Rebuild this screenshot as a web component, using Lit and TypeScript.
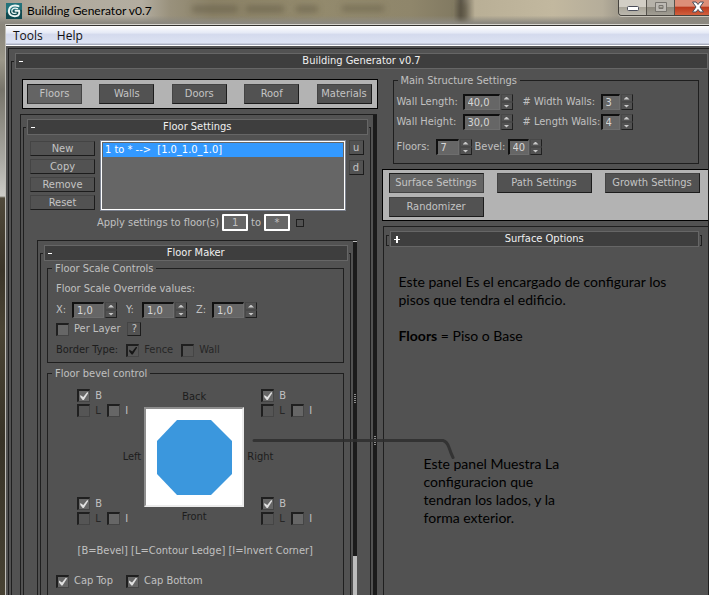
import { LitElement, html, css, svg, nothing } from "lit";
import { customElement, property } from "lit/decorators.js";

const controls = css`
  * {
    box-sizing: border-box;
  }
  button,
  input {
    font: inherit;
    color: inherit;
    margin: 0;
    padding: 0;
    border-radius: 0;
  }
  .check {
    display: inline-flex;
    align-items: center;
    gap: 5px;
  }
  .check input {
    appearance: none;
    flex: none;
    width: 13px;
    height: 13px;
    background: #666;
    border: solid;
    border-width: 2px 1px 1px 2px;
    border-color: #1f1f1f #454545 #454545 #1f1f1f;
    display: grid;
    place-items: center;
  }
  .check input:checked::before {
    content: "";
    width: 8px;
    height: 8px;
    background: #e0e0e0;
    clip-path: polygon(0 38%, 38% 64%, 88% 0, 100% 12%, 44% 100%, 30% 100%, 0 64%);
  }
  .check.off {
    color: #262626;
  }
  .check.off input {
    background: #555;
  }
  .check.off input:checked::before {
    background: #161616;
  }
`;

@customElement("spin-box")
class SpinBox extends LitElement {
  @property() value = "";
  @property() label = "";

  static styles = [
    controls,
    css`
      :host {
        display: flex;
        height: 16px;
      }
      input {
        flex: 1;
        width: 0;
        min-width: 0;
        background: #666;
        color: #d6d6d6;
        border: solid;
        border-width: 2px 1px 1px 2px;
        border-color: #101010 #6e6e6e #6e6e6e #101010;
        padding-left: 3px;
      }
      .arrows {
        display: flex;
        flex-direction: column;
        width: 12px;
        margin-left: 1px;
      }
      button {
        flex: 1;
        background: #525252;
        border: solid 1px;
        border-color: #484848 #202020 #484848 #484848;
        display: grid;
        place-items: center;
      }
      button:last-child {
        border-bottom-color: #202020;
      }
      button::before {
        content: "";
        width: 6px;
        height: 3px;
        background: #c8c8c8;
        clip-path: polygon(50% 0, 100% 100%, 0 100%);
      }
      button:last-child::before {
        clip-path: polygon(0 0, 100% 0, 50% 100%);
      }
    `,
  ];

  render() {
    return html`
      <input type="text" aria-label=${this.label} .value=${this.value} />
      <div class="arrows">
        <button aria-label="Increase"></button>
        <button aria-label="Decrease"></button>
      </div>
    `;
  }
}

@customElement("app-root")
class AppRoot extends LitElement {
  static styles = [
    controls,
    css`
      :host {
        display: flex;
        flex-direction: column;
        min-height: 100vh;
        padding-left: 5px;
        overflow: hidden;
        font: 11px/14px "DejaVu Sans Condensed", "DejaVu Sans", sans-serif;
        color: #c0c0c0;
        background: linear-gradient(
          #8f8b81 0,
          #8a867b 30px,
          #9b9789 60px,
          #77746a 90px,
          #8d8b82 120px,
          #aaa9a3 160px,
          #cdccc7 196px,
          #50493a 198px,
          #3b3529 270px,
          #4a4434 330px,
          #383327 440px,
          #474233 595px
        );
      }

      /* Title bar */
      .title-bar {
        display: flex;
        align-items: flex-start;
        height: 24px;
        margin-left: -5px;
        padding-left: 6px;
        color: #000;
        font: 12px/20px Lato, "Liberation Sans", sans-serif;
        position: relative;
        background: linear-gradient(transparent 65%, #8c8980 95%),
          linear-gradient(
            90deg,
            #a29d92 0,
            #b0aa9d 5%,
            #b3ada0 20%,
            #99917c 24%,
            #8b8267 30%,
            #938a6d 45%,
            #8f866b 58%,
            #827a62 64%,
            #5d574a 65%,
            #b9af96 67%,
            #c2b89f 78%,
            #b5ad9a 85%,
            #928d82 89%,
            #8a867e 100%
          );
      }
      .ghost {
        position: absolute;
        inset: 0;
        width: 100%;
        height: 100%;
      }
      .logo {
        flex: none;
        margin-top: 3px;
        position: relative;
      }
      h1 {
        flex: 1;
        margin: 1px 0 0 5px;
        font: inherit;
        position: relative;
      }
      .window-buttons {
        display: flex;
        height: 16px;
        border: 1px solid #46433e;
        border-width: 0 0 1px 1px;
        border-radius: 0 0 0 4px;
        overflow: hidden;
        position: relative;
        box-shadow: 0 1px 0 #c9c5bb;
      }
      .window-buttons button {
        width: 28px;
        border: 0;
        border-right: 1px solid #55524c;
        background: linear-gradient(#d2cec5 0 45%, #aaa69a 50%, #bcb8ae);
        display: grid;
        place-items: center;
        padding-bottom: 2px;
      }
      .window-buttons .max {
        background: linear-gradient(#b6b2a9 0 45%, #8f8b80 50%, #a29e94);
      }
      .window-buttons .close {
        width: 34px;
        border-right: 0;
        padding-left: 12px;
        background: linear-gradient(#dd8e78 0 40%, #bb3a1e 50%, #d2603e);
      }

      .window {
        flex: 1;
        display: flex;
        flex-direction: column;
        border-top: 1px solid #d8d6d0;
        border-left: 1px solid #c0beb8;
        background: #525252;
      }
      .menu {
        display: flex;
        gap: 14px;
        height: 21px;
        padding: 1px 7px 0;
        border-top: 1px solid #33322f;
        border-bottom: 1px solid #fff;
        background: linear-gradient(#fff, #e6eaf6 35%, #d4daed 45%, #dde3f3 90%, #a8adbd 95%);
        color: #111;
        font: 12px/18px "Open Sans", "Noto Sans", sans-serif;
      }
      .menu button {
        border: 0;
        background: none;
      }

      /* Panels and rollouts */
      .panel {
        flex: 1;
        display: flex;
        border: 1px solid #1f1f1f;
        border-width: 1px 0 0 1px;
      }
      .rollout {
        flex: 1;
        min-width: 0;
        display: flex;
        flex-direction: column;
        position: relative;
        margin: 4px 2px 0;
      }
      .rollout::before {
        content: "";
        position: absolute;
        inset: 8px 0 0 0;
        border: 1px solid #1f1f1f;
        border-bottom: 0;
        pointer-events: none;
      }
      .rollout.closed::before {
        inset: 4px 0 auto 0;
        height: 9px;
        border-bottom: 1px solid #1f1f1f;
      }
      .rollout > h2 {
        position: relative;
        display: flex;
        height: 16px;
        margin: 0 3px 0 4px;
        border: 1px solid #666;
        background: #3e3e3e;
        box-shadow: 0 0 0 1px #525252;
        color: #f0f0f0;
        font: inherit;
      }
      .rollout > h2 button {
        flex: 1;
        border: 0;
        background: none;
        line-height: 14px;
      }
      .sign {
        position: absolute;
        left: 3px;
        top: 7px;
        width: 4px;
        height: 1px;
        background: #fff;
      }
      .closed .sign {
        left: 3px;
        top: 4px;
        width: 6px;
        height: 7px;
        background: linear-gradient(#fff, #fff) center / 6px 1px no-repeat,
          linear-gradient(#fff, #fff) center / 2px 7px no-repeat;
      }
      .client {
        margin: 2px 0 0 2px;
      }
      .client > .rollout {
        margin-right: 0;
      }
      .client > .rollout > h2 {
        margin-right: 1px;
      }
      .columns {
        flex: 1;
        display: grid;
        grid-template-columns: minmax(0, 357fr) minmax(0, 327fr);
        gap: 4px;
        padding: 5px 0 0 9px;
      }
      .column {
        display: flex;
        flex-direction: column;
        gap: 5px;
      }
      .scroll {
        flex: none;
        width: 4px;
        display: flex;
        flex-direction: column;
        background: #1b1b1b;
        position: relative;
      }
      .scroll::before {
        content: "";
        position: absolute;
        left: 1px;
        bottom: 150px;
        width: 2px;
        height: 9px;
        background: repeating-linear-gradient(#8a8a8a 0 1px, #1b1b1b 1px 2px);
      }
      .scroll .thumb {
        margin-top: auto;
        height: 39px;
        background: #bcbcbc;
      }
      .scroll.inner {
        border-top: 1px solid #bcbcbc;
      }
      .scroll.inner::before {
        bottom: 192px;
      }

      /* Buttons */
      .btn {
        height: 20px;
        border: 1px solid;
        border-color: #444 #1c1c1c #1c1c1c #444;
        background: #525252;
        color: #c4c4c4;
        line-height: 16px;
        white-space: nowrap;
      }
      .btn.on {
        background: #646464;
        border-color: #1c1c1c #444 #444 #1c1c1c;
      }
      .btn.small {
        height: 15px;
        line-height: 12px;
      }
      .tabs {
        display: flex;
        justify-content: space-between;
        margin: 5px 0 0 2px;
        padding: 4px 5px 4px 4px;
        border: 1px solid #000;
        background: #b3b3b3;
      }
      .tabs .btn {
        width: 55px;
      }
      .settings-tabs {
        display: grid;
        grid-template-columns: repeat(3, 95px);
        gap: 4px 13px;
        padding: 3px 6px;
        border: 1px solid #000;
        background: #b3b3b3;
      }

      /* Floor settings */
      .left-panel {
        margin-right: 1px;
      }
      .body {
        flex: 1;
        display: flex;
        flex-direction: column;
        padding: 5px 7px 0;
      }
      .body.tight {
        padding-top: 1px;
      }
      .floor-list {
        display: flex;
      }
      .actions {
        display: grid;
        width: 65px;
        gap: 3px;
        align-content: center;
        margin-right: 5px;
      }
      .list {
        flex: 1;
        height: 71px;
        margin: 0 3px 0 0;
        padding: 1px;
        list-style: none;
        background: #666;
        border: 2px solid #fff;
        outline: 1px solid #7c828f;
        outline-offset: -1px;
      }
      .list li {
        height: 14px;
        padding-left: 2px;
        background: #3399ff;
        color: #fff;
        white-space: pre;
      }
      .order {
        display: grid;
        width: 15px;
        gap: 5px;
        align-content: start;
      }
      .apply {
        display: flex;
        align-items: center;
        gap: 3px;
        height: 17px;
        margin-top: 3px;
        padding-left: 67px;
        white-space: nowrap;
      }
      .apply input[type="text"] {
        width: 26px;
        height: 17px;
        border: 2px solid #fff;
        border-radius: 1px;
        background: #666;
        text-align: center;
      }
      .apply .check {
        margin-left: 3px;
      }
      .apply .check input {
        width: 8px;
        height: 8px;
        border-width: 1px;
        border-color: #1f1f1f;
        background: #525252;
      }
      .maker {
        margin: 9px 7px 0 7px;
      }

      /* Groups */
      fieldset {
        min-width: 0;
        margin: 0;
        border: 1px solid #1f1f1f;
        padding: 7px 8px 5px;
      }
      legend {
        margin-left: -4px;
        padding: 0 3px;
        line-height: 13px;
      }
      .line {
        display: flex;
        align-items: center;
      }
      .axes {
        display: grid;
        grid-template-columns: repeat(3, 70px);
        margin: 6px 0 4px;
      }
      .axes .line {
        width: 61px;
      }
      .axes .line span {
        width: 16px;
      }
      .axes spin-box {
        flex: 1;
      }
      .help {
        width: 14px;
        height: 14px;
        margin-left: 7px;
        line-height: 10px;
      }
      .border-type {
        gap: 8px;
        margin-top: 7px;
        color: #1d1d1d;
      }
      .bevel {
        flex: 1;
        margin-top: 4px;
        border-bottom: 0;
        padding-top: 9px;
      }
      .stage {
        display: grid;
        grid-template-columns: 67px 100px 67px;
        justify-content: center;
        height: 136px;
        color: #1d1d1d;
        margin-right: 2px;
      }
      .side {
        display: flex;
        flex-direction: column;
        justify-content: space-between;
        align-items: flex-start;
      }
      .side.right {
        align-items: flex-end;
      }
      .side p {
        margin: 0 3px;
        align-self: flex-end;
      }
      .side.right p {
        align-self: flex-start;
      }
      .middle {
        display: flex;
        flex-direction: column;
        align-items: center;
        gap: 3px;
        padding-top: 1px;
      }
      .corner {
        display: grid;
        grid-template-columns: 30px 20px;
        gap: 2px 0;
        height: 28px;
        color: #c0c0c0;
      }
      .corner .check {
        height: 13px;
      }
      .corner .check:first-child {
        grid-column: 1 / 3;
      }
      .plan {
        width: 100px;
        height: 100px;
        padding: 10px;
        background: #fff;
        border: 2px solid;
        border-color: #8e8e8e #ececec #ececec #8e8e8e;
      }
      .plan svg {
        display: block;
      }
      .key {
        margin: 19px 0 16px 0;
        text-align: center;
        white-space: nowrap;
      }
      .caps {
        gap: 0;
      }
      .caps .check {
        width: 70px;
        white-space: nowrap;
      }

      /* Right column */
      .structure {
        margin: 0 10px 0 11px;
        padding: 7px 3px 8px;
      }
      .structure legend {
        margin-left: 1px;
      }
      .sizes {
        display: grid;
        grid-template-columns: 66px 50px 88px 32px;
        column-gap: 0;
        row-gap: 4px;
        align-items: center;
        white-space: nowrap;
      }
      .sizes .second {
        padding-left: 10px;
      }
      .counts {
        display: grid;
        grid-template-columns: 39px 36px 36px 34px;
        margin-top: 9px;
        align-items: center;
      }
      .counts label + spin-box + label {
        padding-left: 3px;
      }
      .surface {
        margin-left: 1px;
      }
      .surface > .rollout {
        margin-right: 7px;
      }
      .notes {
        padding: 26px 0 0 13px;
        color: #000;
        font: 14px/18px Lato, "Open Sans", sans-serif;
        white-space: nowrap;
      }
      .notes p {
        margin: 0 0 18px;
      }
      .notes .callout {
        position: relative;
        margin: 110px 0 0 25px;
      }
      .pointer {
        position: absolute;
        left: -172px;
        top: -18px;
        pointer-events: none;
      }
    `,
  ];

  private rollout(title: string, body: unknown, closed = false) {
    return html`
      <section class="rollout ${closed ? "closed" : ""}">
        <h2>
          <span class="sign"></span>
          <button aria-expanded=${closed ? "false" : "true"}>${title}</button>
        </h2>
        ${body}
      </section>
    `;
  }

  private check(label: string, checked = false, off = false) {
    return html`<label class="check ${off ? "off" : ""}">
      <input type="checkbox" .checked=${checked} aria-label=${label || "Apply"} />${label
        ? html`<span>${label}</span>`
        : nothing}
    </label>`;
  }

  private corner() {
    return html`<div class="corner">
      ${this.check("B", true)} ${this.check("L", false, true)} ${this.check("I")}
    </div>`;
  }

  private titleBar() {
    return html`
      <header class="title-bar">
        <svg class="ghost" aria-hidden="true">
          <defs>
            <filter id="soft" x="-20%" y="-60%" width="140%" height="220%">
              <feGaussianBlur stdDeviation="3" />
            </filter>
          </defs>
          <g filter="url(#soft)" fill="#574f3b" opacity="0.5">
            <rect x="192" y="6" width="46" height="6" />
            <rect x="246" y="6" width="38" height="6" />
            <rect x="296" y="6" width="22" height="6" />
            <rect x="342" y="6" width="42" height="5" />
            <rect x="458" y="3" width="9" height="18" />
          </g>
        </svg>
        <svg class="logo" width="16" height="16" viewBox="0 0 16 16" aria-hidden="true">
          <rect width="16" height="16" fill="#0f4a50" />
          <path d="M0 0h16v7q-8-2-16 3z" fill="#23727a" />
          <g fill="none" stroke="#eef6f5" stroke-linecap="round" stroke-linejoin="round">
            <path
              d="M12.500 3.200C9 1.700 3.300 2.300 2.900 7.600c-.4 4.700 3.600 5.900 7.200 5.500 2.800-.3 3.500-2.100 3.100-5.300H9.500"
              stroke-width="1.900"
            />
            <path d="M11.500 5.600C8.500 4.700 5.900 5.200 5.800 7.900c-.1 2.400 2 2.700 4.300 2.300" stroke-width="1.300" />
          </g>
        </svg>
        <h1>Building Generator v0.7</h1>
        <div class="window-buttons">
          <button aria-label="Minimize">
            <svg width="14" height="12" viewBox="0 0 14 12">
              <rect x="1.500" y="5.500" width="11" height="4" rx="1" fill="#fff" stroke="#4a4d5a" />
            </svg>
          </button>
          <button class="max" aria-label="Maximize">
            <svg width="14" height="12" viewBox="0 0 14 12">
              <path d="M1.500 1.500h11v9h-11zM5 4.500v3h4v-3z" fill="#bdbab4" stroke="#77746e" fill-rule="evenodd" />
            </svg>
          </button>
          <button class="close" aria-label="Close">
            <svg width="14" height="12" viewBox="0 0 14 12">
              <path
                d="M1.500 1h3.500l2 2.500L9 1h3.500L9 6l3.500 5H9L7 8.500 5 11H1.500L5 6z"
                fill="#fff"
                stroke="#4a4d5a"
              />
            </svg>
          </button>
        </div>
      </header>
    `;
  }

  private floorMaker() {
    return html`
      <div class="body tight">
        <fieldset>
          <legend>Floor Scale Controls</legend>
          <div>Floor Scale Override values:</div>
          <div class="axes">
            ${["X", "Y", "Z"].map(
              (axis) => html`<div class="line">
                <span>${axis}:</span><spin-box label=${axis} value="1,0"></spin-box>
              </div>`
            )}
          </div>
          <div class="line">${this.check("Per Layer")}<button class="btn help">?</button></div>
          <div class="line border-type">
            <span>Border Type:</span> ${this.check("Fence", true, true)} ${this.check("Wall", false, true)}
          </div>
        </fieldset>
        <fieldset class="bevel">
          <legend>Floor bevel control</legend>
          <div class="stage">
            <div class="side">
              ${this.corner()}
              <p>Left</p>
              ${this.corner()}
            </div>
            <div class="middle">
              <span>Back</span>
              <div class="plan">
                <svg width="76" height="76" viewBox="0 0 76 76" aria-hidden="true">
                  ${svg`<polygon points="21,1 55,1 76,22 76,55 55,76 21,76 1,55 1,22" fill="#3b97dd" />`}
                </svg>
              </div>
              <span>Front</span>
            </div>
            <div class="side right">
              ${this.corner()}
              <p>Right</p>
              ${this.corner()}
            </div>
          </div>
          <div class="key">[B=Bevel] [L=Contour Ledge] [I=Invert Corner]</div>
          <div class="line caps">${this.check("Cap Top", true)}${this.check("Cap Bottom", true)}</div>
        </fieldset>
      </div>
    `;
  }

  private floorSettings() {
    return html`
      <div class="body">
        <div class="floor-list">
          <div class="actions">
            ${["New", "Copy", "Remove", "Reset"].map((t) => html`<button class="btn small">${t}</button>`)}
          </div>
          <ul class="list"><li>1 to * --&gt;  [1.0_1.0_1.0]</li></ul>
          <div class="order">
            <button class="btn small">u</button>
            <button class="btn small">d</button>
          </div>
        </div>
        <div class="apply">
          <label for="from">Apply settings to floor(s)</label>
          <input id="from" type="text" .value=${"1"} />
          <label for="until">to</label>
          <input id="until" type="text" .value=${"*"} />
          ${this.check("")}
        </div>
        <div class="panel maker">
          ${this.rollout("Floor Maker", this.floorMaker())}
          <div class="scroll inner"><div class="thumb"></div></div>
        </div>
      </div>
    `;
  }

  private notes() {
    return html`
      <div class="notes">
        <p>Este panel Es el encargado de configurar los<br />pisos que tendra el edificio.</p>
        <p><b>Floors</b> = Piso o Base</p>
        <p class="callout">
          Este panel Muestra La<br />configuracion que<br />tendran los lados, y la<br />forma exterior.
          <svg class="pointer" width="204" height="24" viewBox="0 0 204 24" aria-hidden="true">
            <path
              d="M2 3.500H191q4 1 6 7t4 10"
              fill="none"
              stroke="#2e2e2e"
              stroke-width="3"
              stroke-linecap="round"
              opacity="0.850"
            />
          </svg>
        </p>
      </div>
    `;
  }

  private columns() {
    return html`
      <div class="columns">
        <div class="column">
          <nav class="tabs">
            ${["Floors", "Walls", "Doors", "Roof", "Materials"].map(
              (t, i) => html`<button class="btn ${i === 0 ? "on" : ""}">${t}</button>`
            )}
          </nav>
          <div class="panel left-panel">
            ${this.rollout("Floor Settings", this.floorSettings())}
            <div class="scroll"></div>
          </div>
        </div>
        <div class="column">
          <fieldset class="structure">
            <legend>Main Structure Settings</legend>
            <div class="sizes">
              <span>Wall Length:</span><spin-box label="Wall Length" value="40,0"></spin-box>
              <span class="second"># Width Walls:</span><spin-box label="Width Walls" value="3"></spin-box>
              <span>Wall Height:</span><spin-box label="Wall Height" value="30,0"></spin-box>
              <span class="second"># Length Walls:</span><spin-box label="Length Walls" value="4"></spin-box>
            </div>
            <div class="counts">
              <label>Floors:</label><spin-box label="Floors" value="7"></spin-box>
              <label>Bevel:</label><spin-box label="Bevel" value="40"></spin-box>
            </div>
          </fieldset>
          <nav class="settings-tabs">
            ${["Surface Settings", "Path Settings", "Growth Settings", "Randomizer"].map(
              (t, i) => html`<button class="btn ${i === 0 ? "on" : ""}">${t}</button>`
            )}
          </nav>
          <div class="panel surface">${this.rollout("Surface Options", this.notes(), true)}</div>
        </div>
      </div>
    `;
  }

  render() {
    return html`
      ${this.titleBar()}
      <div class="window">
        <nav class="menu"><button>Tools</button><button>Help</button></nav>
        <main class="panel client">${this.rollout("Building Generator v0.7", this.columns())}</main>
      </div>
    `;
  }
}
